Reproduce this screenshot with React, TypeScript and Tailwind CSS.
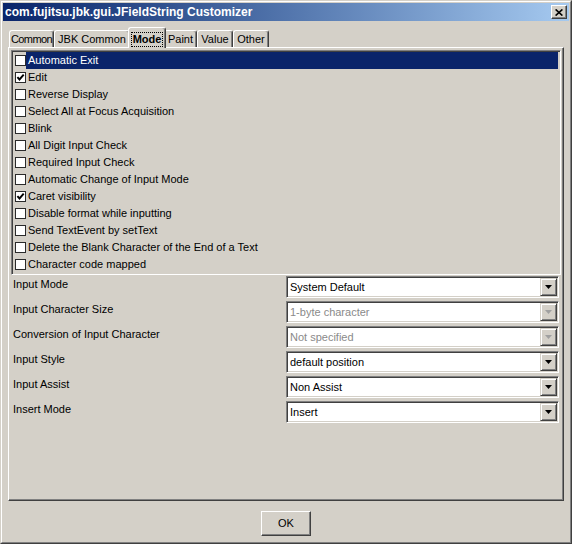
const tabs = [
  { label: "Common", w: "w-[45px]", extra: "tracking-[-0.6px]" },
  { label: "JBK Common", w: "w-[76px]", extra: "" },
  { label: "Mode", w: "w-[38px]", extra: "", selected: true },
  { label: "Paint", w: "w-[33px]", extra: "" },
  { label: "Value", w: "w-[36px]", extra: "" },
  { label: "Other", w: "w-[36px]", extra: "" },
];

const options = [
  { label: "Automatic Exit", checked: false, active: true },
  { label: "Edit", checked: true },
  { label: "Reverse Display" },
  { label: "Select All at Focus Acquisition" },
  { label: "Blink" },
  { label: "All Digit Input Check" },
  { label: "Required Input Check" },
  { label: "Automatic Change of Input Mode" },
  { label: "Caret visibility", checked: true },
  { label: "Disable format while inputting" },
  { label: "Send TextEvent by setText" },
  { label: "Delete the Blank Character of the End of a Text" },
  { label: "Character code mapped" },
];

const fields = [
  { label: "Input Mode", value: "System Default" },
  { label: "Input Character Size", value: "1-byte character", disabled: true },
  { label: "Conversion of Input Character", value: "Not specified", disabled: true },
  { label: "Input Style", value: "default position" },
  { label: "Input Assist", value: "Non Assist" },
  { label: "Insert Mode", value: "Insert" },
];

function CheckBox({ checked }: { checked?: boolean }) {
  return (
    <span className="w-[11px] h-[11px] shrink-0 border border-[#2a2a2a] bg-white flex items-center justify-center">
      {checked && (
        <svg width="9" height="9" viewBox="0 0 9 9">
          <path d="M1.4 4.2 L3.5 6.5 L7.7 1.7" fill="none" stroke="#000" strokeWidth="1.9" />
        </svg>
      )}
    </span>
  );
}

function Combo({ value, disabled }: { value: string; disabled?: boolean }) {
  return (
    <div className="w-[273px] h-[22px] flex bg-white p-[1px] border border-t-[#808080] border-l-[#808080] border-r-white border-b-white shadow-[inset_1px_1px_0_#404040,inset_-1px_-1px_0_#d4d0c8]">
      <span className={`flex-1 pl-[2px] leading-[18px] ${disabled ? "text-[#8a8a8a]" : "text-black"}`}>{value}</span>
      <span className="w-[17px] h-[18px] flex items-center justify-center bg-[#d4d0c8] border border-t-[#d4d0c8] border-l-[#d4d0c8] border-r-[#404040] border-b-[#404040] shadow-[inset_1px_1px_0_#fff,inset_-1px_-1px_0_#808080]">
        <svg width="7" height="4" viewBox="0 0 7 4">
          <polygon points="0,0 7,0 3.5,4" fill={disabled ? "#a0a0a0" : "#000"} />
        </svg>
      </span>
    </div>
  );
}

export default function App() {
  return (
    <div className="w-[572px] h-[544px] bg-[#d4d0c8] border border-t-[#d4d0c8] border-l-[#d4d0c8] border-r-[#404040] border-b-[#404040] font-['Liberation_Sans',Arial,sans-serif] text-[11px] text-black select-none">
      <div className="h-full flex flex-col p-[1px] border border-t-white border-l-white border-r-[#808080] border-b-[#808080]">
        {/* title bar */}
        <div className="h-[18px] shrink-0 flex items-center justify-between pl-[2px] pr-[2px] bg-linear-to-r from-[#0a246a] to-[#a6caf0]">
          <span className="text-white font-bold text-[12px] leading-[18px]">com.fujitsu.jbk.gui.JFieldString Customizer</span>
          <span className="w-[16px] h-[14px] flex items-center justify-center bg-[#d4d0c8] border border-t-white border-l-white border-r-[#404040] border-b-[#404040] shadow-[inset_-1px_-1px_0_#808080]">
            <svg width="8" height="7" viewBox="0 0 8 7">
              <path d="M0.6 0.4 L7.4 6.6 M7.4 0.4 L0.6 6.6" stroke="#000" strokeWidth="1.6" />
            </svg>
          </span>
        </div>

        <div className="px-[5px] pt-[6px] flex flex-col">
          {/* tabs */}
          <div className="h-[20px] flex items-end pl-[1px]">
            {tabs.map((t) =>
              t.selected ? (
                <div
                  key={t.label}
                  className={`${t.w} h-[21px] -mx-[2px] mb-[-1px] relative z-10 bg-[#d4d0c8] pt-[4px] flex justify-center border-t border-l border-white border-r border-r-[#404040] rounded-t-[3px] shadow-[inset_-1px_0_0_#808080]`}
                >
                  <span className="h-[15px] leading-[13px] px-[1px] font-bold outline outline-1 outline-dotted outline-black -outline-offset-1 border border-transparent">
                    {t.label}
                  </span>
                </div>
              ) : (
                <div
                  key={t.label}
                  className={`${t.w} ${t.extra} h-[17px] pt-[2px] text-center leading-[13px] whitespace-nowrap border-t border-l border-white border-r border-r-[#404040] rounded-t-[3px] shadow-[inset_-1px_0_0_#808080]`}
                >
                  {t.label}
                </div>
              )
            )}
          </div>

          {/* panel */}
          <div className="w-[556px] h-[454px] flex flex-col px-[2px] pt-[2px] border-t border-l border-white border-r border-b border-r-[#404040] border-b-[#404040] shadow-[inset_-1px_-1px_0_#808080]">
            <div className="flex flex-col p-[1px] border border-t-[#808080] border-l-[#808080] border-r-white border-b-white shadow-[inset_1px_1px_0_#404040,inset_-1px_-1px_0_#d4d0c8]">
              {options.map((o) => (
                <div key={o.label} className="h-[17px] flex items-center pl-[2px]">
                  <CheckBox checked={o.checked} />
                  <span
                    className={`flex-1 h-[17px] pl-[2px] mr-[1px] leading-[17px] ${o.active ? "bg-[#0a246a] text-white" : ""}`}
                  >
                    {o.label}
                  </span>
                </div>
              ))}
            </div>

            <div className="flex flex-col gap-[3px] mt-[1px]">
              {fields.map((f) => (
                <div key={f.label} className="h-[22px] flex">
                  <span className="w-[275px] pl-[2px] pt-[2px] leading-[13px]">{f.label}</span>
                  <Combo value={f.value} disabled={f.disabled} />
                </div>
              ))}
            </div>
          </div>
        </div>

        {/* footer */}
        <div className="flex justify-center pt-[10px]">
          <button className="w-[50px] h-[25px] bg-[#d4d0c8] text-[11px] border border-t-white border-l-white border-r-[#404040] border-b-[#404040] shadow-[inset_-1px_-1px_0_#808080]">
            OK
          </button>
        </div>
      </div>
    </div>
  );
}
